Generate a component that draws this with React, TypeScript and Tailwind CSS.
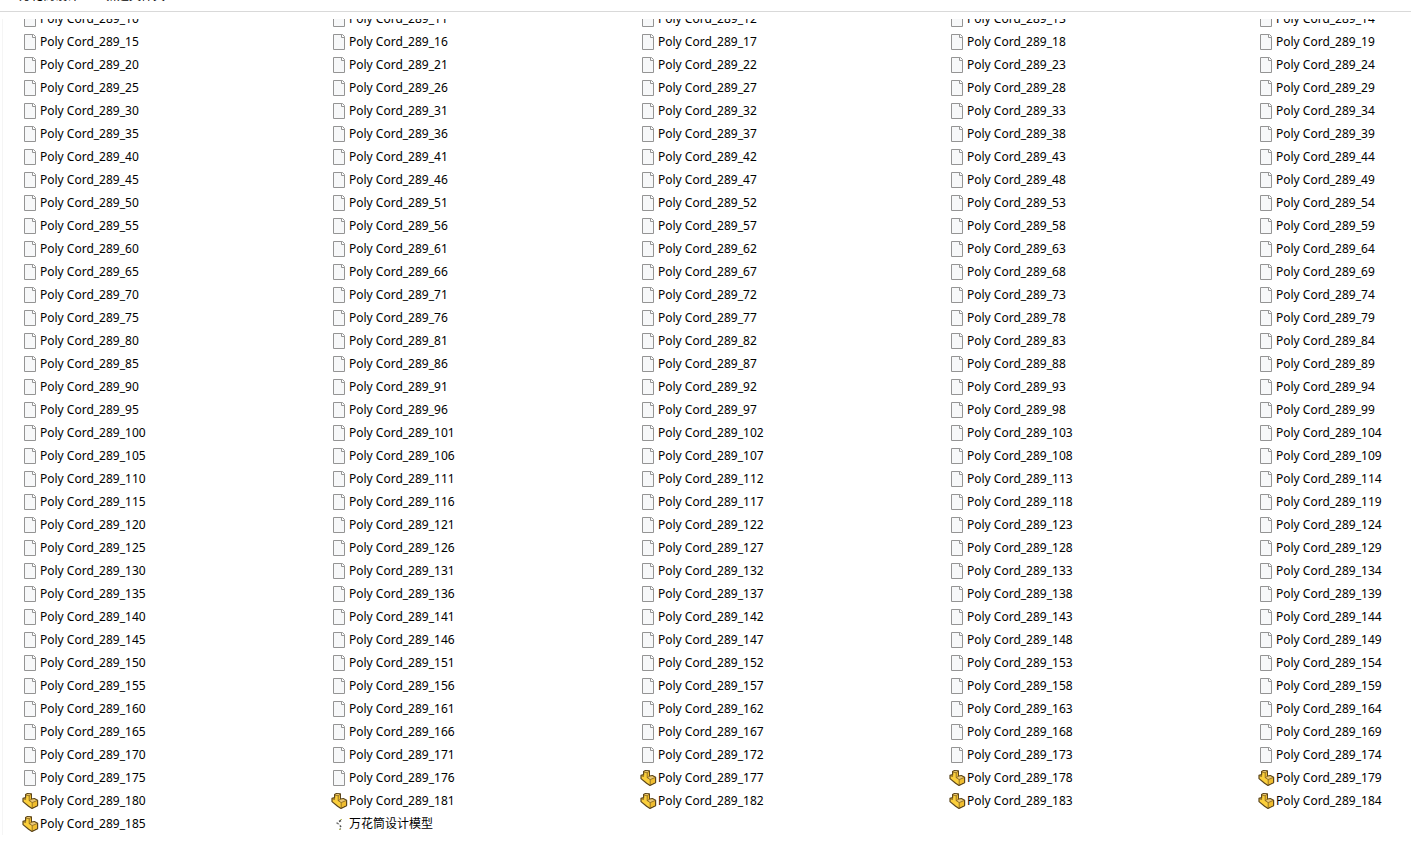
const FIRST = 10;
const LAST = 185;
const FIRST_PART = 177;

function PageIcon() {
  return (
    <svg className="h-4 w-4 shrink-0" viewBox="0 0 16 16" aria-hidden="true">
      <path d="M2.5 .5h9l2 2v13h-11z" fill="#f7f8f9" stroke="#949494" />
      <path d="M10.5 .5v3h3" fill="#ffffff" stroke="#949494" />
    </svg>
  );
}

function PartIcon() {
  return (
    <svg className="h-4 w-4 shrink-0 overflow-visible" viewBox="0 0 16 16" aria-hidden="true">
      <path
        d="M3.6 1.6 5.4.6 9.4 .8V6.2L12.4 5.6 15.6 7.2V12.6L10 15.4 6.6 13.2 1 8.6V5.4L3.6 4.6Z"
        fill="#fbcf3c"
        stroke="#5b451c"
        strokeWidth="1.2"
        strokeLinejoin="round"
      />
      <path d="M4.2 1.8 5.6 1.1 8.9 1.2 7.2 2.6ZM7.4 7.7 9.4 6.7 12.3 6.2 14.9 7.4 10.2 9.4Z" fill="#e9c777" />
      <path d="M7.4 2.8 8.9 1.7V6.6L7.4 7.4ZM10.4 10 15 7.8V12.2L10.4 14.6Z" fill="#f0bd2f" />
      <path d="M3.8 2 7.2 2.8V7.7L10.2 9.6 15.2 7.5M10.2 9.6V15M3.6 4.6V6.6L1.4 5.8M7.2 2.8 9 1.4M7.2 7.7 9.4 6.4" fill="none" stroke="#80611f" strokeWidth=".8" />
    </svg>
  );
}

function ModelIcon() {
  return (
    <svg className="h-4 w-4 shrink-0" viewBox="0 0 16 16" aria-hidden="true">
      <path d="M10 4.5 8 5.5M6 7l1.5 1M9 9.5l1 1.5M9 12.5l.5 1" fill="none" stroke="#4c4c4c" strokeWidth="1.4" />
      <path d="M9.5 3.5h1.5M8 13.5h1.5" stroke="#b9bd58" strokeWidth="1" />
      <path d="M5 7h2M8 8.5l1 1" stroke="#9a9a9a" />
    </svg>
  );
}

export default function App() {
  const numbers = Array.from({ length: LAST - FIRST + 1 }, (_, i) => FIRST + i);

  return (
    <div className="min-h-screen overflow-hidden bg-white font-['Noto_Sans','Noto_Sans_CJK_SC',sans-serif] text-xs text-black">
      <nav className="flex h-3 items-end gap-2 overflow-hidden border-b border-[#d9d9d9] pb-[7px] pl-[19px] leading-4">
        <a href="#design">万花筒设计</a>
        <span className="w-[10px] text-center">›</span>
        <a href="#folder">新建文件夹</a>
      </nav>
      <main className="mt-[7px] ml-[2px] overflow-hidden border-l border-[#f5f5f5] pl-[19px]">
        <ul className="-mt-3 grid grid-cols-[repeat(5,309px)]">
          {numbers.map((n) => (
            <li key={n} className="flex h-[23px] items-center gap-[2px] whitespace-nowrap">
              {n >= FIRST_PART ? <PartIcon /> : <PageIcon />}
              <span>Poly Cord_289_{n}</span>
            </li>
          ))}
          <li className="flex h-[23px] items-center gap-[2px] whitespace-nowrap">
            <ModelIcon />
            <span>万花筒设计模型</span>
          </li>
        </ul>
      </main>
    </div>
  );
}
